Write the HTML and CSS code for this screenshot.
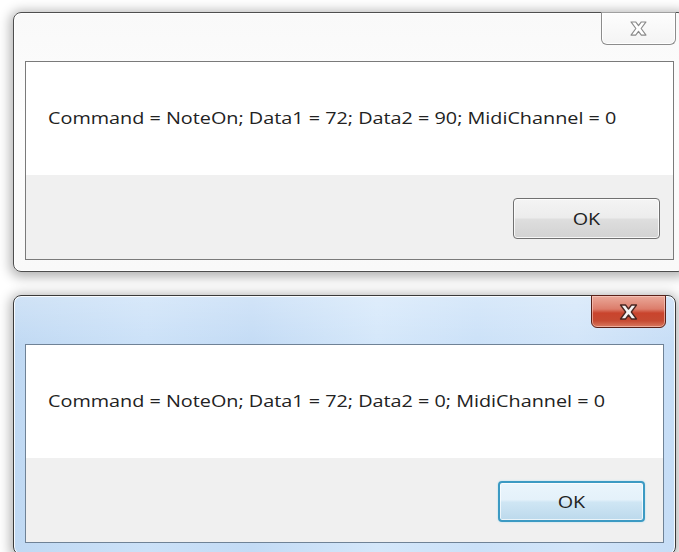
FILE: index.html
```html
<!DOCTYPE html>
<html lang="en">
<head>
<meta charset="utf-8">
<title>MIDI messages</title>
<link rel="stylesheet" href="styles.css">
</head>
<body>
<div class="desk">
  <div class="window window--inactive">
    <div class="titlebar">
      <button class="close" aria-label="Close">
        <svg class="close-glyph" viewBox="0 0 20 16" width="19" height="15">
          <polygon points="2,1 7,1 10,5 13,1 18,1 12.8,8 18,15 13,15 10,11 7,15 2,15 7.2,8"/>
        </svg>
      </button>
    </div>
    <div class="client">
      <div class="message"><span class="wide">Command = NoteOn; Data1 = 72; Data2 = 90; MidiChannel = 0</span></div>
      <div class="footer">
        <button class="ok"><span class="wide">OK</span></button>
      </div>
    </div>
  </div>

  <div class="window window--active">
    <div class="titlebar">
      <button class="close" aria-label="Close">
        <svg class="close-glyph" viewBox="0 0 20 16" width="21" height="16">
          <polygon points="2,1 7,1 10,5 13,1 18,1 12.8,8 18,15 13,15 10,11 7,15 2,15 7.2,8"/>
        </svg>
      </button>
    </div>
    <div class="client">
      <div class="message"><span class="wide">Command = NoteOn; Data1 = 72; Data2 = 0; MidiChannel = 0</span></div>
      <div class="footer">
        <button class="ok ok--default"><span class="wide">OK</span></button>
      </div>
    </div>
  </div>
</div>
</body>
</html>
```

FILE: styles.css
```css
html, body {
  margin: 0;
  padding: 0;
}

body {
  width: 679px;
  height: 552px;
  overflow: hidden;
  background: #ffffff;
  font-family: "Open Sans", "Noto Sans", "Liberation Sans", sans-serif;
  color: #222222;
}

.desk {
  display: flex;
  flex-direction: column;
  align-items: flex-start;
  gap: 23px;
  padding: 12px 0 0 13px;
}

/* ---- window frame ---- */
.window {
  box-sizing: border-box;
  height: 260px;
  padding: 0 11px 11px;
  border: 1px solid #4e4e4e;
  border-radius: 8px;
  display: flex;
  flex-direction: column;
  flex-shrink: 0;
  box-shadow: 0 2px 12px 3px rgba(0, 0, 0, 0.3), inset 0 0 0 1px rgba(255, 255, 255, 0.85);
}

.window--inactive {
  width: 673px;
  background: linear-gradient(180deg, #f9f9f9 0%, #fdfdfd 40%, #f9f9f9 100%);
}

.window--active {
  width: 663px;
  border-color: #3a3a3a;
  background:
    linear-gradient(180deg, rgba(255, 255, 255, 0.25) 0%, rgba(255, 255, 255, 0) 50px),
    linear-gradient(90deg, #c0d9f3 0%, #cbe1f8 20%, #c3dbf5 36%, #d4e7fa 55%, #cbe1f8 70%, #d2e5f9 85%, #c6ddf6 100%);
}

.titlebar {
  height: 48px;
  margin: 0 -11px;
  padding-right: 9px;
  display: flex;
  justify-content: flex-end;
  align-items: flex-start;
}

/* ---- caption close button ---- */
.close {
  width: 75px;
  height: 33px;
  margin-top: -1px;
  padding: 0;
  display: flex;
  align-items: center;
  justify-content: center;
  border-radius: 0 0 6px 6px;
  cursor: default;
}

.window--inactive .close {
  border: 1px solid #8c8c8c;
  border-top-color: #a0a0a0;
  background: linear-gradient(180deg, #fdfdfd, #f4f4f4);
  box-shadow: inset 0 0 0 1px #ffffff;
}

.window--inactive .close-glyph polygon {
  fill: #ffffff;
  stroke: #8a8a8a;
  stroke-width: 1.2;
  stroke-linejoin: round;
}

.window--active .close {
  border: 1px solid #5a2118;
  background: linear-gradient(180deg, #eaa99a 0%, #dc7d6b 42%, #c9442d 55%, #c64a32 80%, #d97a60 100%);
  box-shadow: inset 0 0 0 1px rgba(255, 215, 205, 0.55);
}

.window--active .close-glyph polygon {
  fill: #f4f4f4;
  stroke: #4a2620;
  stroke-width: 1.3;
  stroke-linejoin: round;
}

/* ---- client area ---- */
.client {
  flex: 1;
  display: flex;
  flex-direction: column;
  border: 1px solid #7a7a7a;
  background: #f0f0f0;
}

.window--active .client {
  border-color: #6f8296;
}

.message {
  height: 113px;
  box-sizing: border-box;
  display: flex;
  align-items: center;
  padding: 0 0 3px 22px;
  background: #ffffff;
  font-size: 16.5px;
  white-space: nowrap;
}

.wide {
  display: inline-block;
  transform: scaleX(1.2);
  transform-origin: left center;
}

.footer {
  flex: 1;
  display: flex;
  justify-content: flex-end;
  align-items: flex-start;
  padding: 23px 13px 0 0;
  background: #f0f0f0;
}

.window--active .footer {
  padding-right: 18px;
}

/* ---- push buttons ---- */
.ok {
  width: 147px;
  height: 41px;
  padding: 0;
  font-family: inherit;
  font-size: 16.5px;
  color: #222222;
  border: 1px solid #707070;
  border-radius: 4px;
  background: linear-gradient(180deg, #f4f4f4 0%, #ececec 48%, #dedede 52%, #d2d2d2 100%);
  box-shadow: inset 0 0 0 1px rgba(255, 255, 255, 0.8);
  cursor: default;
}

.ok .wide {
  transform-origin: center center;
}

.ok--default {
  border: 2px solid #3c9ac3;
  background: linear-gradient(180deg, #eaf5fc 0%, #e4f1fa 45%, #cfe6f4 52%, #bcd9ec 100%);
  box-shadow: inset 0 0 0 1px rgba(255, 255, 255, 0.7), 0 0 2px #a8dcf0;
}
```
